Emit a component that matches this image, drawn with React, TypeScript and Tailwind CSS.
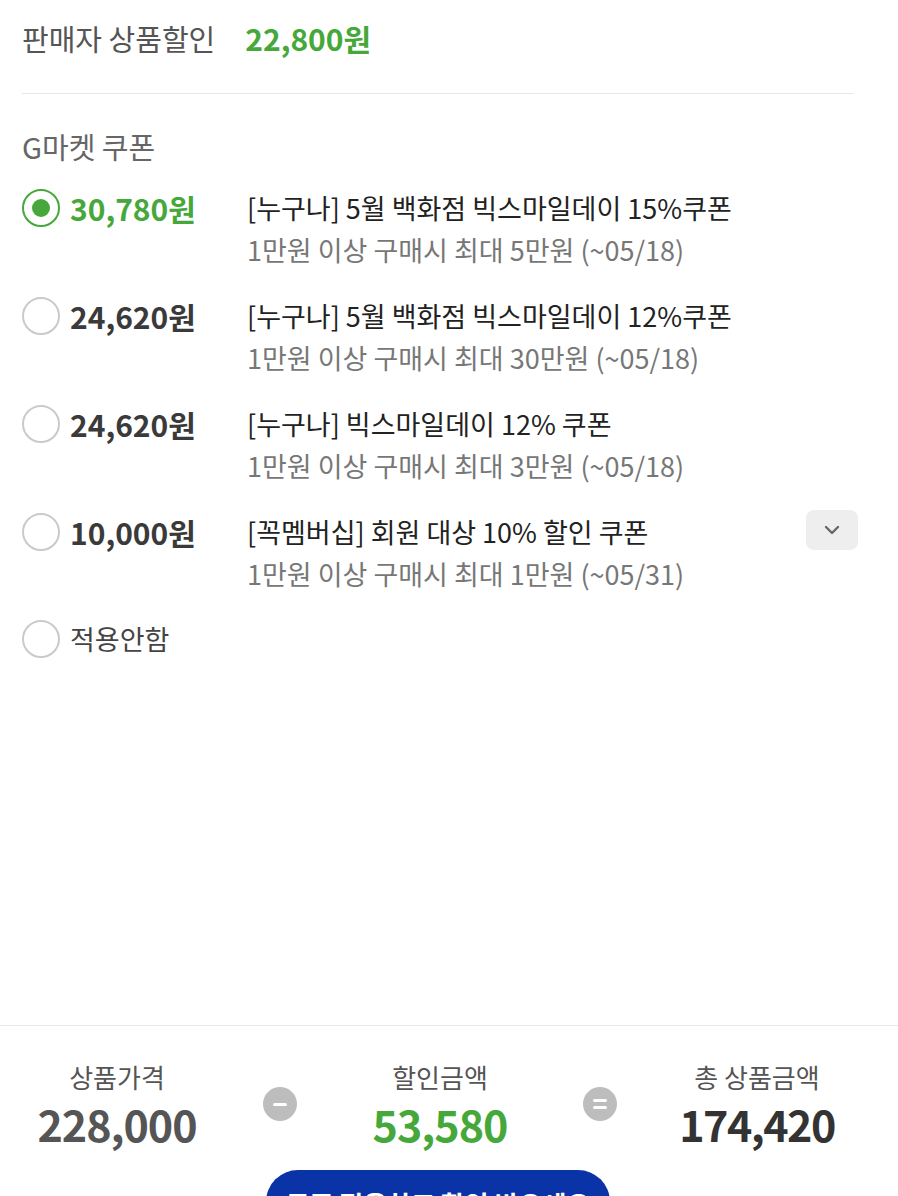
import { ChevronDown } from 'lucide-react';
import clsx from 'clsx';

type Coupon = {
  price: string;
  title: string;
  sub: string;
  expandable?: boolean;
};

const coupons: Coupon[] = [
  {
    price: '30,780원',
    title: '[누구나] 5월 백화점 빅스마일데이 15%쿠폰',
    sub: '1만원 이상 구매시 최대 5만원 (~05/18)',
  },
  {
    price: '24,620원',
    title: '[누구나] 5월 백화점 빅스마일데이 12%쿠폰',
    sub: '1만원 이상 구매시 최대 30만원 (~05/18)',
  },
  {
    price: '24,620원',
    title: '[누구나] 빅스마일데이 12% 쿠폰',
    sub: '1만원 이상 구매시 최대 3만원 (~05/18)',
  },
  {
    price: '10,000원',
    title: '[꼭멤버십] 회원 대상 10% 할인 쿠폰',
    sub: '1만원 이상 구매시 최대 1만원 (~05/31)',
    expandable: true,
  },
];

function Radio({ checked }: { checked?: boolean }) {
  return (
    <span
      className={clsx(
        'flex h-[38px] w-[38px] shrink-0 items-center justify-center rounded-full border-2',
        checked ? 'border-[#46a83a]' : 'border-[#cacaca]',
      )}
    >
      {checked && <span className="h-[18px] w-[18px] rounded-full bg-[#46a83a]" />}
    </span>
  );
}

export default function App() {
  const selected = 0;

  return (
    <div
      className="flex h-[1196px] w-[898px] flex-col overflow-hidden bg-white"
      style={{ fontFamily: '"Noto Sans CJK KR", "Noto Sans", sans-serif' }}
    >
      {/* coupon list */}
      <div className="flex-1 pl-[22px] pr-[40px] pt-[20px]">
        <div className="flex items-center gap-[30px] leading-[36px]">
          <span className="text-[29px] text-[#555]">판매자 상품할인</span>
          <span className="text-[30px] font-bold text-[#46a83a]">22,800원</span>
        </div>

        <div className="mr-[5px] mt-[37px] h-px bg-[#e6e6e6]" />

        <h2 className="mt-[34px] text-[29px] leading-[36px] text-[#666]">G마켓 쿠폰</h2>

        <ul className="mt-[26px] flex flex-col gap-[30px]">
          {coupons.map((c, i) => (
            <li key={i} className="flex items-start">
              <div className="mt-[-1px]">
                <Radio checked={i === selected} />
              </div>
              <span
                className={clsx(
                  'ml-[10px] w-[177px] shrink-0 text-[30px] font-bold leading-[36px]',
                  i === selected ? 'text-[#46a83a]' : 'text-[#3a3a3a]',
                )}
              >
                {c.price}
              </span>
              <div className="flex min-w-0 flex-1 flex-col gap-[6px]">
                <div className="flex items-center justify-between">
                  <span className="text-[27px] leading-[36px] text-[#222]">{c.title}</span>
                  {c.expandable && (
                    <button className="-mt-[4px] flex h-[40px] w-[52px] items-center justify-center rounded-lg bg-[#eeeeee]">
                      <ChevronDown size={24} strokeWidth={2.4} color="#666" />
                    </button>
                  )}
                </div>
                <span className="text-[27px] leading-[36px] text-[#777]">{c.sub}</span>
              </div>
            </li>
          ))}
          <li className="-mt-[2px] flex items-center">
            <Radio />
            <span className="ml-[10px] text-[27px] leading-[36px] text-[#444]">적용안함</span>
          </li>
        </ul>
      </div>

      {/* summary */}
      <div className="h-[171px] shrink-0 border-t border-[#e8e8e8] pt-[35px]">
        <div className="flex items-center">
          <div className="flex w-[234px] flex-col items-center">
            <span className="text-[26px] leading-[32px] text-[#555]">상품가격</span>
            <span className="mt-[6px] text-[43px] font-bold leading-[48px] tracking-[-1px] text-[#555]">
              228,000
            </span>
          </div>
          <span className="ml-[29px] flex h-[34px] w-[34px] items-center justify-center rounded-full bg-[#bdbdbd]">
            <span className="h-[3px] w-[14px] rounded-full bg-white" />
          </span>
          <div className="ml-[33px] flex w-[220px] flex-col items-center">
            <span className="text-[26px] leading-[32px] text-[#555]">할인금액</span>
            <span className="mt-[6px] text-[43px] font-bold leading-[48px] tracking-[-1px] text-[#46a83a]">
              53,580
            </span>
          </div>
          <span className="ml-[33px] flex h-[34px] w-[34px] flex-col items-center justify-center gap-[4px] rounded-full bg-[#bdbdbd]">
            <span className="h-[3px] w-[14px] rounded-full bg-white" />
            <span className="h-[3px] w-[14px] rounded-full bg-white" />
          </span>
          <div className="ml-[20px] flex w-[240px] flex-col items-center">
            <span className="text-[26px] leading-[32px] text-[#555]">총 상품금액</span>
            <span className="mt-[6px] text-[43px] font-bold leading-[48px] tracking-[-1.5px] text-[#333]">
              174,420
            </span>
          </div>
        </div>

        <div className="mt-[23px] flex justify-center pr-[22px]">
          <button className="h-[64px] w-[344px] rounded-full bg-[#0a33a8] pt-[4px] text-[26px] font-bold leading-[36px] text-white">
            쿠폰 적용하고 할인 받으세요
          </button>
        </div>
      </div>
    </div>
  );
}
